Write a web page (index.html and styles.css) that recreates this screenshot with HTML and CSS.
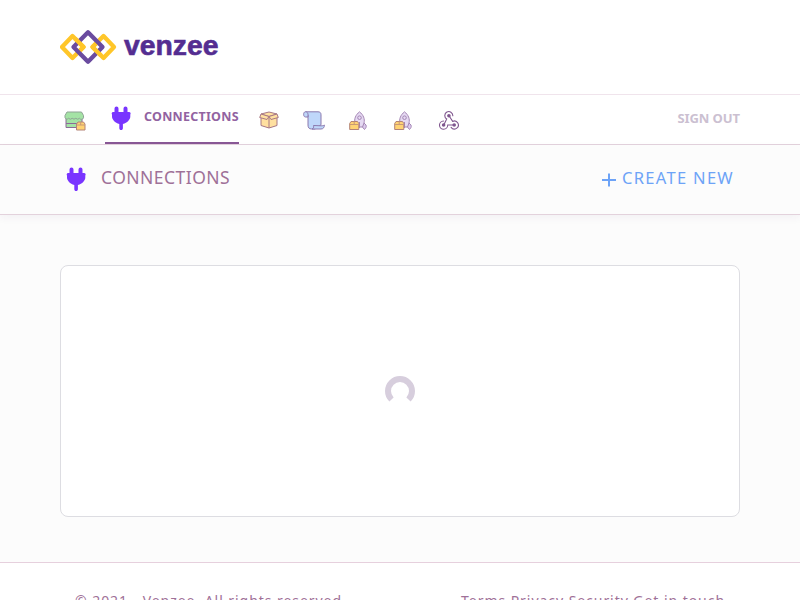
FILE: index.html
```html
<!DOCTYPE html>
<html lang="en">
<head>
<meta charset="utf-8">
<title>Venzee</title>
<link rel="stylesheet" href="styles.css">
</head>
<body>
<svg class="defs" aria-hidden="true">
  <symbol id="plug" viewBox="0 0 20 24">
    <path d="M3.500 2.500a2 2 0 0 1 4 0V6h5V2.500a2 2 0 0 1 4 0V6h1.600a1.500 1.500 0 0 1 1.200 2.400v2.100c0 3-3 6.300-7.400 7.500v4.300a1.800 1.800 0 0 1-3.600 0V18C4 16.800 1 13.500 1 10.500V8.400A1.500 1.500 0 0 1 2 6h1.500z"/>
  </symbol>
  <symbol id="rocket" viewBox="0 0 18 20">
    <g stroke="#a587b5" stroke-width="1" stroke-linejoin="round">
      <path fill="#dccbec" d="M6 11 4 13v5l4-2M14 11l3 3c.8 2-.5 3.500-1.500 4.500L13 15.500"/>
      <path fill="#e5d9f2" d="M10.500 .8C6.500 4 5 8 6 12l1.500 4h6l1.500-4c1-4-.5-8-4.500-11.200z"/>
      <circle fill="#e5d9f2" cx="10.500" cy="6.700" r="1.800"/>
      <path fill="none" d="M10.500 11v6"/>
      <path fill="#ffd374" stroke="#b38378" d="M.7 12.500 2 10.500h6.500l1.300 2V18.500H.7z"/>
      <path fill="none" stroke="#c99a76" d="M.7 13.500h9.100M5.200 10.500v3"/>
    </g>
  </symbol>
</svg>
<header class="brand">
  <svg class="logo" width="160" height="40" viewBox="0 0 160 40">
    <g fill="none" stroke-width="4.300" stroke-linejoin="round">
      <path stroke="#ffc629" d="M2 20 12.500 9 23.500 20 12.500 31z"/>
      <path stroke="#ffc629" d="M32.500 20 43.500 9 54 20 43.500 31z"/>
      <path stroke="#6a4b9f" d="M13.500 20 28 5.300 42.500 20 28 34.700z"/>
      <path stroke="#ffc629" d="M15 11.500 23.500 20 20 23.500M41 28.500 32.500 20 36 16.500"/>
    </g>
    <text class="wordmark" x="64" y="28" textLength="94.500" lengthAdjust="spacingAndGlyphs">venzee</text>
  </svg>
</header>
<nav class="nav">
  <a class="item store"><svg width="22" height="20" viewBox="0 0 22 20"><g stroke="#8c6a98" stroke-width="1" stroke-linejoin="round"><path fill="#a4e3a5" d="M2 7v9.500h16V7"/><path fill="#a4e3a5" stroke="#8fa395" d="M3 1h14.500l2 3.500v2.300a2.200 2.200 0 0 1-4 .5 2.600 2.600 0 0 1-3.700 0 2.600 2.600 0 0 1-3.600 0 2.600 2.600 0 0 1-3.700 0 2 2 0 0 1-3.500-.8v-2z"/><path fill="none" d="M2 12.500h12"/><path fill="#ffd374" stroke="#b38378" d="M12.500 13 14 11h5.500l1.500 2v6h-8.500z"/><path fill="none" stroke="#c99a76" d="M12.500 14h8.500M16.700 11v3"/></g></svg></a>
  <a class="item active"><svg class="plug" width="20" height="24"><use href="#plug"/></svg><span>CONNECTIONS</span></a>
  <a class="item box"><svg width="20" height="18" viewBox="0 0 20 18"><g fill="#ffe0a0" stroke="#a77886" stroke-width="1" stroke-linejoin="round"><path d="M2 5v9.500l8 2.500 8-2.500V5"/><path d="M2 3 10 1l8 2-8 2.500z"/><path d="M2 3 .7 6.500 8 8.500l2-3 2 3 7.300-2L18 3l-8 2.500zM10 6v11"/></g></svg></a>
  <a class="item scroll"><svg width="22" height="19" viewBox="0 0 22 19"><g fill="#bfd7fa" stroke="#8b79ae" stroke-width="1" stroke-linejoin="round"><path d="M2.500 .8H15c2 0 3 1 3 3v10L12 18H8.500C6 18 5 16.500 5 14V4z"/><path d="M2.500 .8C0 .8 0 6 2.500 6H5V3.500C5 2 4 .8 2.500 .8z"/><path d="M10.500 14.500c.4 2 0 3-1.500 3.500h9c2.500 0 3.500-2 3.300-4-1 .8-2 .8-3.300.8z"/></g></svg></a>
  <a class="item rocket"><svg width="18" height="20"><use href="#rocket"/></svg></a>
  <a class="item rocket-next"><svg width="18" height="20"><use href="#rocket"/></svg></a>
  <a class="item hook"><svg width="20" height="19" viewBox="0 0 20 19"><g fill="none" stroke="#80578f" stroke-width="1.100" stroke-linecap="round"><path d="M13.800 4.700A4 4 0 1 0 7.700 8L5 13.500M10 4.700l3.600 5.700a4 4 0 1 1-1.500 6M15.200 14H8.700A4.100 4.100 0 1 1 4.500 10"/></g><g fill="#80578f"><circle cx="9.900" cy="4.700" r="1.800"/><circle cx="4.600" cy="14" r="1.800"/><circle cx="15.200" cy="14" r="1.800"/></g></svg></a>
  <a class="signout">SIGN OUT</a>
</nav>
<section class="toolbar">
  <svg class="plug" width="20" height="24"><use href="#plug"/></svg>
  <h1>CONNECTIONS</h1>
  <a class="create"><svg width="14" height="14" viewBox="0 0 14 14"><path d="M7 .5v13M0 7h14" stroke="#6da3f7" stroke-width="2"/></svg><span>CREATE NEW</span></a>
</section>
<main><div class="panel"><svg width="30" height="30" viewBox="0 0 30 30"><path d="M6.500 23.500a12 12 0 1 1 17 0" fill="none" stroke="#d7cedd" stroke-width="6"/></svg></div></main>
<footer><span class="copy">© 2021 - Venzee. All rights reserved.</span><span class="links">Terms Privacy Security Get in touch</span></footer>
</body>
</html>
```
FILE: styles.css
```css
* { box-sizing: border-box; }
body { margin: 0; height: 600px; overflow: hidden; background: #fcfcfc; font-family: "Noto Sans", sans-serif; color: #9f7198; }
svg { display: block; flex: none; }
.defs { display: none; }
.brand { height: 95px; padding: 27px 60px 0; background: #fff; border-bottom: 1px solid #f0e4ec; }
.wordmark { font: bold 28px "Liberation Sans", sans-serif; fill: #542d91; stroke: #542d91; stroke-width: .6px; }
.nav { display: flex; height: 50px; padding: 0 60px; background: #fff; border-bottom: 1px solid #e3d2dc; }
.item { display: flex; padding-top: 16px; }
.store { width: 45px; padding-left: 4px; }
.plug { fill: #7935ff; }
.active { width: 134px; height: 49px; padding: 11px 0 0 6px; border-bottom: 2px solid #885795; color: #9263a1; font-size: 12.5px; font-weight: 700; line-height: 22px; }
.active span { margin-left: 13px; letter-spacing: .25px; white-space: nowrap; }
.box { margin-left: 20px; }
.scroll { margin-left: 24px; }
.rocket { margin-left: 24px; }
.rocket-next { margin-left: 27px; }
.hook { margin-left: 27px; }
.signout { margin-left: auto; padding-top: 12px; color: #cbc0d1; font-size: 13px; font-weight: 700; line-height: 22px; letter-spacing: -.08px; }
.toolbar { display: flex; height: 70px; padding: 22px 66px 0; border-bottom: 1px solid #e3d2dc; box-shadow: 0 3px 8px rgba(70, 30, 90, .05); }
h1 { margin: 0 0 0 15px; font-size: 17.5px; line-height: 21px; font-weight: 400; letter-spacing: .47px; }
.create { display: flex; margin-left: auto; color: #6da3f7; font-size: 16.5px; line-height: 21px; letter-spacing: 1.3px; }
.create svg { margin: 6px 6px 0 0; }
main { height: 347px; padding: 50px 60px 0; }
.panel { display: flex; align-items: center; justify-content: center; height: 252px; background: #fff; border: 1px solid #dddde2; border-radius: 8px; }
footer { display: flex; justify-content: space-between; height: 38px; padding: 27px 75px 0; background: #fff; border-top: 1px solid #e6d0dd; font-size: 14px; line-height: 22px; letter-spacing: .95px; white-space: nowrap; }
```
